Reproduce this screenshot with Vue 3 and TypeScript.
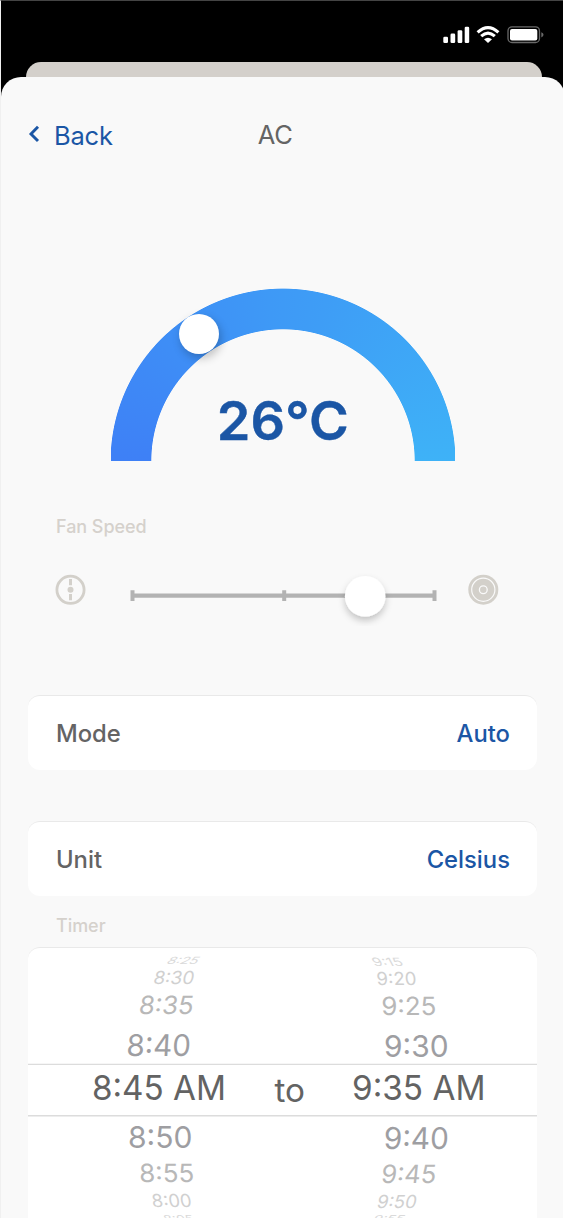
<script setup lang="ts">
interface WheelItem {
  label: string
  x: number
  y: number
  width: number
  size: number
  skew: number
  tone: string
}

const wheelItems: WheelItem[] = [
  { label: '8:25', x: 137.5, y: 15.6, width: 31, size: 10, skew: -36, tone: 'faint' },
  { label: '8:30', x: 124.5, y: 36, width: 40.5, size: 18, skew: -12, tone: 'light' },
  { label: '8:35', x: 110, y: 66, width: 54.5, size: 25, skew: -8, tone: 'soft' },
  { label: '8:40', x: 98, y: 108, width: 64.5, size: 30, skew: -3, tone: 'near' },
  { label: '8:45 AM', x: 64, y: 151.6, width: 134, size: 34, skew: 0, tone: 'active' },
  { label: '8:50', x: 100, y: 200, width: 64.5, size: 30, skew: 0, tone: 'near' },
  { label: '8:55', x: 111.5, y: 234, width: 55, size: 25, skew: 2, tone: 'soft' },
  { label: '8:00', x: 124.5, y: 259, width: 40, size: 18, skew: 8, tone: 'light' },
  { label: '8:05', x: 137, y: 274.2, width: 30, size: 9.5, skew: 22, tone: 'faint' },
  { label: '9:15', x: 346.5, y: 18.3, width: 30, size: 11.5, skew: 28, tone: 'faint' },
  { label: '9:20', x: 349, y: 37, width: 40, size: 18, skew: 5, tone: 'light' },
  { label: '9:25', x: 353.5, y: 67, width: 55, size: 25, skew: 1, tone: 'soft' },
  { label: '9:30', x: 356, y: 109, width: 64.5, size: 30, skew: 0, tone: 'near' },
  { label: '9:35 AM', x: 324, y: 152.4, width: 133.5, size: 34, skew: 0, tone: 'active' },
  { label: '9:40', x: 355.5, y: 200.5, width: 65, size: 30, skew: -2, tone: 'near' },
  { label: '9:45', x: 352.5, y: 235, width: 55, size: 25, skew: -6, tone: 'soft' },
  { label: '9:50', x: 348, y: 260, width: 39.5, size: 18, skew: -12, tone: 'light' },
  { label: '9:55', x: 344, y: 274.2, width: 31, size: 9.5, skew: -28, tone: 'faint' },
]

const settings = [
  { name: 'Mode', value: 'Auto' },
  { name: 'Unit', value: 'Celsius' },
]
</script>

<template>
  <div class="screen">
    <div class="status">
      <svg class="status-icons" width="102" height="20" viewBox="0 0 102 20">
        <g fill="#fff">
          <rect x="1.3" y="11.7" width="4.7" height="6.3" rx="1.3" />
          <rect x="8.5" y="8.6" width="4.7" height="9.4" rx="1.3" />
          <rect x="15.6" y="5.2" width="4.7" height="12.8" rx="1.3" />
          <rect x="22.7" y="1.8" width="4.5" height="16.2" rx="1.3" />
          <path d="M46 18.1 L42 14.2 Q46 11.2 50 14.2 Z" />
        </g>
        <g fill="none" stroke="#fff" stroke-width="3.1">
          <path d="M35.6 7.4 Q46 -2 56.4 7.4" />
          <path d="M39.2 11.2 Q46 5 52.8 11.2" />
        </g>
        <rect x="66" y="1.9" width="31.5" height="15.6" rx="4" fill="none" stroke="#696969" stroke-width="1.3" />
        <rect x="68" y="4" width="27.3" height="11.5" rx="2" fill="#fff" />
        <path d="M99.3 7.2 Q101.5 8 101.5 9.8 Q101.5 11.6 99.3 12.4 Z" fill="#696969" />
      </svg>
    </div>
    <div class="under-sheet"></div>
    <main class="sheet">
      <header class="nav">
        <svg class="chevron" width="12" height="18" viewBox="0 0 12 18">
          <path d="M10 1.8 L3 8.9 L10 16" fill="none" stroke="#1b56a5" stroke-width="2.9" />
        </svg>
        <span class="back">Back</span>
        <h1 class="title">AC</h1>
      </header>

      <section class="dial">
        <div class="gauge">
          <div class="arc"></div>
          <div class="knob"></div>
          <div class="temperature">26°C</div>
        </div>
      </section>

      <p class="caption fan-caption">Fan Speed</p>
      <section class="fan">
        <svg width="31" height="31" viewBox="0 0 31 31" class="fan-icon">
          <circle cx="15.5" cy="15.8" r="13.6" fill="none" stroke="#d3d0ca" stroke-width="2.8" />
          <path d="M15.5 5.1 V11.3 M15.5 20.1 V26.3" stroke="#d3d0ca" stroke-width="3" />
          <circle cx="15.5" cy="15.8" r="3" fill="#d3d0ca" />
        </svg>
        <svg class="slider" width="330" height="60" viewBox="0 0 330 60">
          <defs>
            <filter id="lift" x="-50%" y="-50%" width="200%" height="200%">
              <feDropShadow dx="0" dy="4" stdDeviation="3.5" flood-color="#000" flood-opacity="0.22" />
            </filter>
          </defs>
          <path d="M13.5 29.7 H315" stroke="#b3b3b3" stroke-width="4.3" />
          <path d="M13.5 24.3 V35 M165.2 24.3 V35 M315.5 24.3 V35" stroke="#b3b3b3" stroke-width="4" />
          <circle cx="246.2" cy="30.3" r="20.3" fill="#fff" filter="url(#lift)" />
        </svg>
        <svg width="31" height="31" viewBox="0 0 31 31" class="fan-icon">
          <circle cx="15.3" cy="15.7" r="15" fill="#d3d0ca" />
          <circle cx="15.3" cy="15.7" r="11.6" fill="none" stroke="#fafafa" stroke-width="1.2" />
          <circle cx="15.3" cy="15.7" r="3.9" fill="none" stroke="#fafafa" stroke-width="1.3" />
        </svg>
      </section>

      <section class="settings">
        <div v-for="item in settings" :key="item.name" class="card row">
          <span>{{ item.name }}</span>
          <span class="value">{{ item.value }}</span>
        </div>
      </section>

      <p class="caption timer-caption">Timer</p>
      <section class="card timer">
        <svg width="509" height="272" viewBox="0 0 509 272">
          <path d="M0 116.4 H509 M0 167.8 H509" stroke="#dcdcdc" stroke-width="1.4" />
          <text
            v-for="item in wheelItems"
            :key="item.label"
            :class="item.tone"
            :font-size="item.size"
            :textLength="item.width"
            lengthAdjust="spacingAndGlyphs"
            :transform="`translate(${item.x} ${item.y}) skewX(${item.skew})`"
          >{{ item.label }}</text>
          <text class="active to" x="246.5" y="153.7" font-size="33" textLength="30.5" lengthAdjust="spacingAndGlyphs">to</text>
        </svg>
      </section>
    </main>
  </div>
</template>

<style>
body {
  background: #fff;
}
</style>

<style scoped>
.screen {
  box-sizing: border-box;
  width: 563px;
  height: 1218px;
  overflow: hidden;
  display: flex;
  flex-direction: column;
  background: linear-gradient(#000 0 110px, #f9f9f9 110px);
  border-top: 1px solid #444;
  border-left: 1px solid #f0f0f0;
  font-family: Inter, "Liberation Sans", sans-serif;
}
.status {
  height: 61px;
  flex: none;
  display: flex;
  justify-content: flex-end;
}
.status-icons {
  margin: 24px 19px 0 0;
}
.under-sheet {
  flex: none;
  height: 15px;
  margin: 0 21.5px 0 24.5px;
  border-radius: 15px 15px 0 0;
  background: #d4d0cb;
}
.sheet {
  flex: 1;
  display: flex;
  flex-direction: column;
  margin-right: -1.5px;
  padding-right: 1.5px;
  border-radius: 20px 20px 0 0;
  background: #f9f9f9;
}
.nav {
  flex: none;
  height: 116px;
  display: flex;
  align-items: center;
  box-sizing: border-box;
  padding-left: 26.7px;
}
.chevron {
  margin-top: -3px;
}
.back,
.title {
  margin: 0 0 0 14.3px;
  font-size: 25.5px;
  font-weight: 400;
  letter-spacing: -0.2px;
  color: #1b56a5;
}
.title {
  margin: -1px 0 0 145px;
  color: #646464;
}
.dial {
  box-sizing: border-box;
  flex: none;
  height: 276px;
  display: flex;
  align-items: flex-end;
  padding: 0 0 8px 110px;
}
.gauge {
  position: relative;
  width: 343.5px;
  height: 173px;
  display: grid;
  align-items: end;
  justify-items: center;
}
.arc {
  grid-area: 1 / 1;
  width: 343.5px;
  height: 173px;
  background: conic-gradient(from 270deg at 50% 100%, #3e80f6 0deg, #3e99f6 85deg, #3e9df6 105deg, #3eb2f7 180deg);
  mask: radial-gradient(
    circle at 50% 100%,
    transparent 131.3px,
    #000 132.1px,
    #000 172px,
    transparent 172.8px
  );
}
.knob {
  position: absolute;
  left: 67.6px;
  top: 25.6px;
  width: 40.4px;
  height: 40.4px;
  border-radius: 50%;
  background: #fff;
  box-shadow: 2px 4px 10px rgba(0, 0, 0, 0.24);
}
.temperature {
  grid-area: 1 / 1;
  font-size: 54px;
  line-height: 60px;
  font-weight: 600;
  color: #1b56a5;
  -webkit-text-stroke: 0.4px #1b56a5;
  margin-bottom: 10px;
}
.caption {
  flex: none;
  margin: 0;
  padding-left: 55px;
  font-size: 18px;
  line-height: 22px;
  font-weight: 450;
  letter-spacing: -0.05px;
  color: #d5d1cc;
}
.fan-caption {
  margin-top: 47px;
}
.fan {
  flex: none;
  height: 60px;
  margin-top: 28px;
  display: flex;
  padding-left: 54px;
}
.fan-icon {
  margin-top: 8px;
}
.slider {
  margin: 0 0 0 33px;
}
.slider + .fan-icon {
  margin-left: 18.5px;
}
.settings {
  flex: none;
  margin: 69px 26px 0 27px;
  display: grid;
  gap: 51px;
}
.card {
  box-sizing: border-box;
  background: #fff;
  border-top: 1.3px solid #e9e9e9;
  border-radius: 12px;
}
.row {
  height: 75px;
  padding: 0 27px 0 28px;
  display: flex;
  align-items: center;
  justify-content: space-between;
  font-size: 23.8px;
  font-weight: 450;
  color: #646464;
}
.value {
  color: #1b56a5;
}
.timer-caption {
  margin-top: 19px;
}
.timer {
  flex: none;
  height: 290px;
  margin: 10px 26px 0 27px;
}
.timer svg {
  display: block;
}
.active {
  fill: #636363;
}
.near {
  fill: #9e9ea2;
}
.soft {
  fill: #b8b8b8;
}
.light {
  fill: #d0d0d0;
}
.faint {
  fill: #dadada;
}
</style>
